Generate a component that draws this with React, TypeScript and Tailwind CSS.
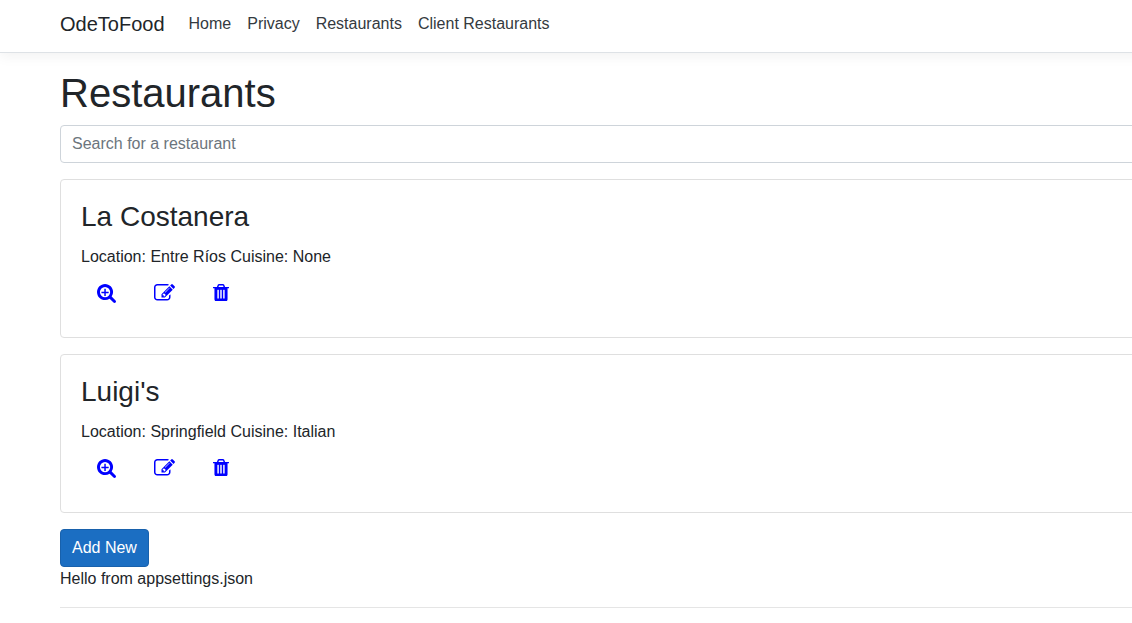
const links = ["Home", "Privacy", "Restaurants", "Client Restaurants"];
const restaurants = [
  { name: "La Costanera", location: "Entre Ríos", cuisine: "None" },
  { name: "Luigi's", location: "Springfield", cuisine: "Italian" },
];

const icons = [
  {
    label: "Details",
    width: "w-[19px]",
    box: "0 0 1664 1664",
    d: "M1024 704v64q0 13-9.500 22.500t-22.500 9.500h-224v224q0 13-9.500 22.500t-22.500 9.500h-64q-13 0-22.500-9.500t-9.500-22.500v-224h-224q-13 0-22.500-9.500t-9.500-22.500v-64q0-13 9.500-22.500t22.500-9.500h224v-224q0-13 9.500-22.500t22.500-9.500h64q13 0 22.500 9.500t9.500 22.500v224h224q13 0 22.500 9.500t9.500 22.500zM1152 704q0-185-131.500-316.500t-316.500-131.500-316.500 131.500-131.500 316.500 131.500 316.500 316.500 131.500 316.500-131.500 131.500-316.500zM1664 1536q0 53-37.500 90.500t-90.500 37.500q-54 0-90-38l-343-342q-179 124-399 124-143 0-273.500-55.500t-225-150-150-225-55.500-273.500 55.500-273.500 150-225 225-150 273.500-55.500 273.500 55.500 225 150 150 225 55.500 273.500q0 220-124 399l343 343q37 37 37 90z",
  },
  {
    label: "Edit",
    width: "w-[21px]",
    box: "0 128 1792 1408",
    d: "M888 1184l116-116-152-152-116 116v56h96v96h56zM1328 464q-16-16-33 1l-350 350q-17 17-1 33t33-1l350-350q17-17 1-33zM1408 1058v190q0 119-84.500 203.500t-203.500 84.500h-832q-119 0-203.500-84.500t-84.500-203.500v-832q0-119 84.500-203.500t203.500-84.500h832q63 0 117 25 15 7 18 23 3 17-9 29l-49 49q-14 14-32 8-23-6-45-6h-832q-66 0-113 47t-47 113v832q0 66 47 113t113 47h832q66 0 113-47t47-113v-126q0-13 9-22l64-64q15-15 35-7t20 29zM1312 320l288 288-672 672h-288v-288zM1756 452l-92 92-288-288 92-92q28-28 68-28t68 28l152 152q28 28 28 68t-28 68z",
  },
  {
    label: "Delete",
    width: "w-[16px]",
    box: "0 0 1408 1536",
    d: "M512 1248v-704q0-14-9-23t-23-9h-64q-14 0-23 9t-9 23v704q0 14 9 23t23 9h64q14 0 23-9t9-23zM768 1248v-704q0-14-9-23t-23-9h-64q-14 0-23 9t-9 23v704q0 14 9 23t23 9h64q14 0 23-9t9-23zM1024 1248v-704q0-14-9-23t-23-9h-64q-14 0-23 9t-9 23v704q0 14 9 23t23 9h64q14 0 23-9t9-23zM480 256h448l-48-117q-7-9-17-11h-317q-10 2-17 11zM1408 288v64q0 14-9 23t-23 9h-96v948q0 83-47 143.500t-113 60.500h-832q-66 0-113-58.500t-47-141.500v-952h-96q-14 0-23-9t-9-23v-64q0-14 9-23t23-9h309l70-167q15-37 54-63t79-26h320q40 0 79 26t54 63l70 167h309q14 0 23 9t9 23z",
  },
];

export default function App() {
  return (
    <div className="overflow-x-hidden bg-white font-['Liberation_Sans',sans-serif] text-base text-[#212529]">
      <header className="-mr-4 mb-4 border-b border-[#dee2e6] shadow-[0_4px_12px_rgba(0,0,0,0.05)]">
        <nav className="flex h-[52px] items-center pb-1 pl-[60px]">
          <a href="#" className="mr-4 text-xl leading-[30px]">OdeToFood</a>
          <div className="flex text-[#343a40]">
            {links.map((link) => (
              <a key={link} href="#" className="px-2">{link}</a>
            ))}
          </div>
        </nav>
      </header>
      <main className="-mr-2 ml-[60px]">
        <h1 className="mb-2 text-[40px] leading-[48px]">Restaurants</h1>
        <input
          type="search"
          aria-label="Search for a restaurant"
          placeholder="Search for a restaurant"
          className="mb-4 block h-[38px] w-full rounded border border-[#ced4da] px-[11px] placeholder:text-[#6c757d]"
        />
        {restaurants.map((r) => (
          <section key={r.name} className="mb-4 rounded border border-[#dfdfdf] p-5">
            <h2 className="mb-2 text-[28px] leading-[34px]">{r.name}</h2>
            <p className="leading-[30px]">Location: {r.location} Cuisine: {r.cuisine}</p>
            <div className="flex h-[45px] items-start gap-[38px] pl-4 pt-3">
              {icons.map((icon) => (
                <a key={icon.label} href="#" aria-label={`${icon.label} ${r.name}`} className="text-[#0000ff]">
                  <svg viewBox={icon.box} fill="currentColor" className={icon.width}>
                    <path d={icon.d} />
                  </svg>
                </a>
              ))}
            </div>
          </section>
        ))}
        <button type="button" className="block h-[38px] rounded border border-[#1861ac] bg-[#1b6ec2] px-[11px] text-white">Add New</button>
        <p>Hello from appsettings.json</p>
        <hr className="my-4 border-[#e5e5e5]" />
      </main>
    </div>
  );
}
